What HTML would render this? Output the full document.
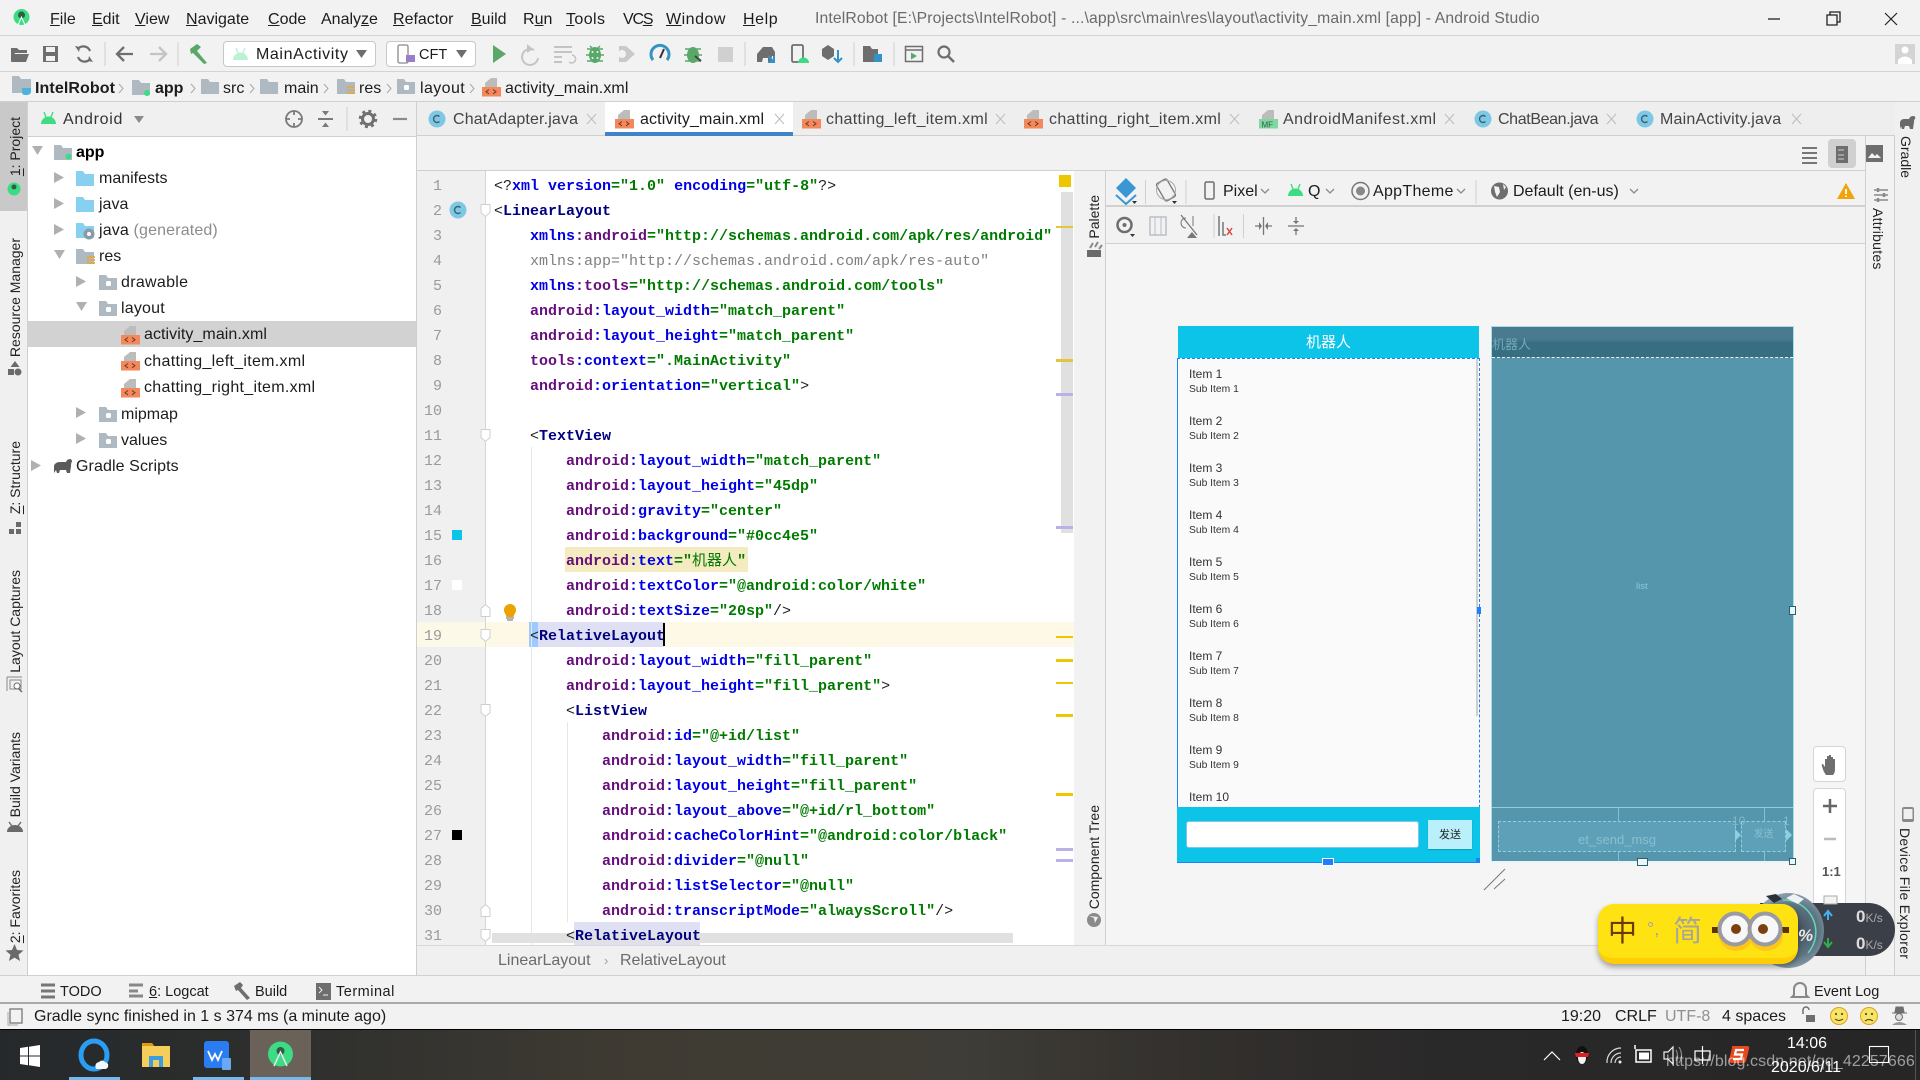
<!DOCTYPE html>
<html lang="en"><head><meta charset="utf-8"><title>IntelRobot - Android Studio</title>
<style>
html,body{margin:0;padding:0;width:1920px;height:1080px;overflow:hidden;background:#f2f2f2}
body{position:relative;font-family:"Liberation Sans","Noto Sans CJK SC",sans-serif;color:#1c1c1c}
.b{position:absolute}
.t{position:absolute;white-space:pre;font-size:16px;line-height:20px;transform:translateY(1px)}
.vl{position:absolute;white-space:pre;writing-mode:vertical-rl;transform:rotate(180deg);font-size:14px;line-height:20px;color:#222}
.vr{position:absolute;white-space:pre;writing-mode:vertical-rl;font-size:14px;line-height:20px;color:#222}
.l{position:absolute;left:494px;white-space:pre;font:bold 15px/25px "Liberation Mono","Noto Sans CJK SC",monospace;color:#222;height:25px;transform:translateY(1px)}
.l i{font-style:normal;color:#660e7a}.l u{text-decoration:none;color:#0000e6}.l s{text-decoration:none;color:#007a00}.l b{color:#000080}.l em{font-style:normal;font-weight:normal;color:#222}
.ln{position:absolute;left:416px;width:26px;text-align:right;font:15px/25px "Liberation Mono",monospace;color:#9a9a9a;transform:translateY(1px)}
.it{position:absolute;left:1189px;font-size:12px;line-height:14px;color:#333;transform:translateY(1px)}
.su{position:absolute;left:1189px;font-size:10.3px;line-height:14px;color:#333;transform:translateY(1px)}
svg{position:absolute;left:0;top:0}
</style></head><body>
<!-- chrome backgrounds -->
<div class="b" style="left:0;top:35px;width:1920px;height:1px;background:#d4d4d4"></div>
<div class="b" style="left:0;top:71px;width:1920px;height:1px;background:#d4d4d4"></div>
<div class="b" style="left:0;top:101px;width:1920px;height:1px;background:#d0d0d0"></div>
<div class="b" style="left:416px;top:102px;width:1479px;height:33px;background:#eeeeee"></div>
<div class="b" style="left:416px;top:135px;width:1479px;height:1px;background:#cfcfcf"></div>
<div class="b" style="left:605px;top:102px;width:188px;height:30px;background:#fff"></div>
<div class="b" style="left:605px;top:132px;width:188px;height:4px;background:#4083c9"></div>
<!-- left stripe -->
<div class="b" style="left:0;top:102px;width:27px;height:873px;background:#f0f0f0;border-right:1px solid #cfcfcf"></div>
<div class="b" style="left:0;top:102px;width:27px;height:109px;background:#c9c9c9"></div>
<!-- project panel -->
<div class="b" style="left:28px;top:102px;width:388px;height:34px;background:#f0f0f0;border-bottom:1px solid #cfcfcf"></div>
<div class="b" style="left:28px;top:137px;width:388px;height:838px;background:#fff"></div>
<div class="b" style="left:27px;top:321px;width:389px;height:26px;background:#d2d2d2"></div>
<div class="b" style="left:416px;top:102px;width:1px;height:873px;background:#cfcfcf"></div>
<!-- editor -->
<div class="b" style="left:417px;top:136px;width:1478px;height:35px;background:#f2f2f2;border-bottom:1px solid #d0d0d0;box-sizing:border-box"></div>
<div class="b" style="left:417px;top:171px;width:68px;height:774px;background:#f0f0f0;border-right:1px solid #d5d5d5"></div>
<div class="b" style="left:486px;top:171px;width:588px;height:774px;background:#fff"></div>
<div class="b" style="left:417px;top:622px;width:68px;height:25px;background:#fdf9e8"></div>
<div class="b" style="left:486px;top:622px;width:588px;height:25px;background:#fef9e6"></div>
<div class="b" style="left:565px;top:547px;width:183px;height:25px;background:#f5ebc0"></div>
<div class="b" style="left:529px;top:622px;width:9px;height:25px;background:#9ecbff"></div>
<div class="b" style="left:538px;top:622px;width:126px;height:25px;background:#e0e0f5"></div>
<div class="b" style="left:574px;top:922px;width:126px;height:23px;background:#e0e0f5"></div>
<div class="b" style="left:531px;top:447px;width:1px;height:498px;background:#e6e6e6"></div>
<div class="b" style="left:567px;top:722px;width:1px;height:200px;background:#e6e6e6"></div>
<div class="b" style="left:1061px;top:192px;width:12px;height:341px;background:#e0e0e0"></div>
<div class="b" style="left:492px;top:933px;width:521px;height:10px;background:#e1e1e1"></div>
<div class="b" style="left:1059px;top:175px;width:12px;height:12px;background:#edc700"></div>
<div class="b" style="left:1056px;top:226px;width:17px;height:2px;background:#e3c53a"></div>
<div class="b" style="left:1056px;top:359px;width:17px;height:3px;background:#e3c53a"></div>
<div class="b" style="left:1056px;top:393px;width:17px;height:3px;background:#b8b2e8"></div>
<div class="b" style="left:1056px;top:526px;width:17px;height:3px;background:#b8b2e8"></div>
<div class="b" style="left:1056px;top:636px;width:17px;height:2px;background:#edc700"></div>
<div class="b" style="left:1056px;top:659px;width:17px;height:3px;background:#edc700"></div>
<div class="b" style="left:1056px;top:682px;width:17px;height:2px;background:#edc700"></div>
<div class="b" style="left:1056px;top:714px;width:17px;height:3px;background:#edc700"></div>
<div class="b" style="left:1056px;top:793px;width:17px;height:3px;background:#edc700"></div>
<div class="b" style="left:1056px;top:848px;width:17px;height:3px;background:#b8b2e8"></div>
<div class="b" style="left:1056px;top:859px;width:17px;height:3px;background:#b8b2e8"></div>
<div class="b" style="left:452px;top:530px;width:10px;height:10px;background:#0cc4e5"></div>
<div class="b" style="left:452px;top:580px;width:10px;height:10px;background:#fff"></div>
<div class="b" style="left:452px;top:830px;width:10px;height:10px;background:#000"></div>
<div class="b" style="left:663px;top:623px;width:2px;height:23px;background:#000"></div>
<!-- line numbers -->
<div class="ln" style="top:173px">1</div><div class="ln" style="top:198px">2</div><div class="ln" style="top:223px">3</div><div class="ln" style="top:248px">4</div><div class="ln" style="top:273px">5</div><div class="ln" style="top:298px">6</div><div class="ln" style="top:323px">7</div><div class="ln" style="top:348px">8</div><div class="ln" style="top:373px">9</div><div class="ln" style="top:398px">10</div><div class="ln" style="top:423px">11</div><div class="ln" style="top:448px">12</div><div class="ln" style="top:473px">13</div><div class="ln" style="top:498px">14</div><div class="ln" style="top:523px">15</div><div class="ln" style="top:548px">16</div><div class="ln" style="top:573px">17</div><div class="ln" style="top:598px">18</div><div class="ln" style="top:623px">19</div><div class="ln" style="top:648px">20</div><div class="ln" style="top:673px">21</div><div class="ln" style="top:698px">22</div><div class="ln" style="top:723px">23</div><div class="ln" style="top:748px">24</div><div class="ln" style="top:773px">25</div><div class="ln" style="top:798px">26</div><div class="ln" style="top:823px">27</div><div class="ln" style="top:848px">28</div><div class="ln" style="top:873px">29</div><div class="ln" style="top:898px">30</div><div class="ln" style="top:923px">31</div>
<!-- code -->
<div class="l" style="top:173px"><em>&lt;?</em><u>xml version</u><s>="1.0"</s> <u>encoding</u><s>="utf-8"</s><em>?&gt;</em></div>
<div class="l" style="top:198px"><em>&lt;</em><b>LinearLayout</b></div>
<div class="l" style="top:223px;left:530px"><u>xmlns</u><i>:android</i><s>="http://schemas.android.com/apk/res/android"</s></div>
<div class="l" style="top:248px;left:530px;font-weight:normal;color:#808080">xmlns:app="http://schemas.android.com/apk/res-auto"</div>
<div class="l" style="top:273px;left:530px"><u>xmlns</u><i>:tools</i><s>="http://schemas.android.com/tools"</s></div>
<div class="l" style="top:298px;left:530px"><i>android</i><u>:layout_width</u><s>="match_parent"</s></div>
<div class="l" style="top:323px;left:530px"><i>android</i><u>:layout_height</u><s>="match_parent"</s></div>
<div class="l" style="top:348px;left:530px"><i>tools</i><u>:context</u><s>=".MainActivity"</s></div>
<div class="l" style="top:373px;left:530px"><i>android</i><u>:orientation</u><s>="vertical"</s><em>&gt;</em></div>
<div class="l" style="top:423px;left:530px"><em>&lt;</em><b>TextView</b></div>
<div class="l" style="top:448px;left:566px"><i>android</i><u>:layout_width</u><s>="match_parent"</s></div>
<div class="l" style="top:473px;left:566px"><i>android</i><u>:layout_height</u><s>="45dp"</s></div>
<div class="l" style="top:498px;left:566px"><i>android</i><u>:gravity</u><s>="center"</s></div>
<div class="l" style="top:523px;left:566px"><i>android</i><u>:background</u><s>="#0cc4e5"</s></div>
<div class="l" style="top:548px;left:566px"><i>android</i><u>:text</u><s>="<span style="font-weight:normal">机器人</span>"</s></div>
<div class="l" style="top:573px;left:566px"><i>android</i><u>:textColor</u><s>="@android:color/white"</s></div>
<div class="l" style="top:598px;left:566px"><i>android</i><u>:textSize</u><s>="20sp"</s><em>/&gt;</em></div>
<div class="l" style="top:623px;left:530px"><em>&lt;</em><b>RelativeLayout</b></div>
<div class="l" style="top:648px;left:566px"><i>android</i><u>:layout_width</u><s>="fill_parent"</s></div>
<div class="l" style="top:673px;left:566px"><i>android</i><u>:layout_height</u><s>="fill_parent"</s><em>&gt;</em></div>
<div class="l" style="top:698px;left:566px"><em>&lt;</em><b>ListView</b></div>
<div class="l" style="top:723px;left:602px"><i>android</i><u>:id</u><s>="@+id/list"</s></div>
<div class="l" style="top:748px;left:602px"><i>android</i><u>:layout_width</u><s>="fill_parent"</s></div>
<div class="l" style="top:773px;left:602px"><i>android</i><u>:layout_height</u><s>="fill_parent"</s></div>
<div class="l" style="top:798px;left:602px"><i>android</i><u>:layout_above</u><s>="@+id/rl_bottom"</s></div>
<div class="l" style="top:823px;left:602px"><i>android</i><u>:cacheColorHint</u><s>="@android:color/black"</s></div>
<div class="l" style="top:848px;left:602px"><i>android</i><u>:divider</u><s>="@null"</s></div>
<div class="l" style="top:873px;left:602px"><i>android</i><u>:listSelector</u><s>="@null"</s></div>
<div class="l" style="top:898px;left:602px"><i>android</i><u>:transcriptMode</u><s>="alwaysScroll"</s><em>/&gt;</em></div>
<div class="l" style="top:923px;left:566px"><em>&lt;</em><b>RelativeLayout</b></div>
<!-- breadcrumb & bottom bars -->
<div class="b" style="left:417px;top:945px;width:1478px;height:30px;background:#f0f0f0;border-top:1px solid #d8d8d8;box-sizing:border-box"></div>
<div class="t" style="left:498px;top:950px;color:#6b6b6b">LinearLayout</div>
<div class="t" style="left:604px;top:950px;color:#a0a0a0;font-size:13px">›</div>
<div class="t" style="left:620px;top:950px;color:#6b6b6b">RelativeLayout</div>
<div class="b" style="left:0;top:975px;width:1920px;height:1px;background:#d0d0d0"></div>
<div class="b" style="left:0;top:1002px;width:1920px;height:2px;background:#a9a9a9"></div>
<div class="b" style="left:0;top:1004px;width:1920px;height:25px;background:#f2f2f2"></div>
<!-- design panel -->
<div class="b" style="left:1074px;top:171px;width:31px;height:774px;background:#f2f2f2"></div>
<div class="b" style="left:1105px;top:171px;width:1px;height:774px;background:#d0d0d0"></div>
<div class="b" style="left:1106px;top:171px;width:759px;height:36px;background:#f2f2f2;border-bottom:2px solid #d0d0d0;box-sizing:border-box"></div>
<div class="b" style="left:1106px;top:207px;width:759px;height:37px;background:#f2f2f2;border-bottom:1px solid #d0d0d0;box-sizing:border-box"></div>
<div class="b" style="left:1106px;top:244px;width:759px;height:701px;background:#f5f5f5"></div>
<div class="b" style="left:1865px;top:136px;width:30px;height:839px;background:#f2f2f2;border-left:1px solid #d0d0d0;border-right:1px solid #d0d0d0;box-sizing:border-box"></div>
<div class="b" style="left:1895px;top:102px;width:25px;height:873px;background:#f0f0f0"></div>
<div class="b" style="left:1828px;top:139px;width:28px;height:29px;background:#d0d0d0;border-radius:4px"></div>
<!-- phone left -->
<div class="b" style="left:1178px;top:326px;width:301px;height:32px;background:#0cc4e8;color:#fff;font-size:15px;line-height:34px;text-align:center">机器人</div>
<div class="b" style="left:1177px;top:358px;width:303px;height:505px;background:#fafafa;box-sizing:border-box;border:1px dashed #1e80ff;border-left:1px solid #1e80ff"></div>
<div class="b" style="left:1476px;top:359px;width:2px;height:357px;background:#cfcfcf"></div>
<div class="it" style="top:366px">Item 1</div><div class="su" style="top:382px">Sub Item 1</div>
<div class="it" style="top:413px">Item 2</div><div class="su" style="top:429px">Sub Item 2</div>
<div class="it" style="top:460px">Item 3</div><div class="su" style="top:476px">Sub Item 3</div>
<div class="it" style="top:507px">Item 4</div><div class="su" style="top:523px">Sub Item 4</div>
<div class="it" style="top:554px">Item 5</div><div class="su" style="top:570px">Sub Item 5</div>
<div class="it" style="top:601px">Item 6</div><div class="su" style="top:617px">Sub Item 6</div>
<div class="it" style="top:648px">Item 7</div><div class="su" style="top:664px">Sub Item 7</div>
<div class="it" style="top:695px">Item 8</div><div class="su" style="top:711px">Sub Item 8</div>
<div class="it" style="top:742px">Item 9</div><div class="su" style="top:758px">Sub Item 9</div>
<div class="it" style="top:789px">Item 10</div>
<div class="b" style="left:1177px;top:807px;width:303px;height:56px;background:#0cc4e8;border-bottom:1px solid #1e80ff;box-sizing:border-box"></div>
<div class="b" style="left:1186px;top:821px;width:233px;height:27px;background:#fff;border-radius:3px;border:1px solid #7cc8ea;box-sizing:border-box"></div>
<div class="b" style="left:1428px;top:820px;width:44px;height:29px;background:#b9f0fb;font-size:11px;line-height:30px;text-align:center;color:#222;box-shadow:0 1px 1px #0a9dba">发送</div>
<div class="b" style="left:1322px;top:858px;width:10px;height:6px;background:#1e80ff;border:1px solid #fff"></div>
<div class="b" style="left:1476px;top:858px;width:4px;height:5px;background:#1e80ff"></div>
<div class="b" style="left:1477px;top:607px;width:4px;height:7px;background:#1e80ff"></div>
<!-- blueprint -->
<div class="b" style="left:1491px;top:326px;width:303px;height:537px;background:#5596ac;box-sizing:border-box;border:1px solid #a7dcea"></div>
<div class="b" style="left:1492px;top:327px;width:301px;height:30px;background:linear-gradient(#4a7a8e 0,#4a7a8e 12px,#376e82 16px);border-bottom:1px dashed #e8f4f8"></div>
<div class="t" style="left:1492px;top:334px;font-size:13px;color:#74a9b8">机器人</div>
<div class="t" style="left:1636px;top:576px;font-size:9.5px;color:#8cc9dc">list</div>
<div class="b" style="left:1492px;top:807px;width:301px;height:1px;background:#8ed0e2"></div>
<div class="b" style="left:1618px;top:808px;width:1px;height:54px;background:#7fc2d6"></div>
<div class="b" style="left:1764px;top:808px;width:1px;height:54px;background:#7fc2d6"></div>
<div class="b" style="left:1498px;top:821px;width:238px;height:31px;background:#5fa0b9;box-sizing:border-box;border:1px dashed #8ed0e2;text-align:center;color:#86c0d0;font-size:13px;line-height:35px">et_send_msg</div>
<div class="b" style="left:1741px;top:821px;width:45px;height:31px;background:#5fa0b9;box-sizing:border-box;border:1px dashed #8ed0e2;text-align:center;color:#86c0d0;font-size:10px;line-height:26px">发送</div>
<div class="t" style="left:1732px;top:810px;font-size:12px;color:#7fb9ca">10</div>
<div class="t" style="left:1783px;top:810px;font-size:12px;color:#7fb9ca">1</div>
<div class="b" style="left:1491px;top:861px;width:303px;height:2px;background:#e8f4f8"></div>
<div class="b" style="left:1637px;top:858px;width:9px;height:6px;background:#e8f8fb;border:1px solid #2e5f70"></div>
<div class="b" style="left:1789px;top:858px;width:5px;height:5px;background:#e8f8fb;border:1px solid #2e5f70"></div>
<div class="b" style="left:1789px;top:606px;width:5px;height:7px;background:#e8f8fb;border:1px solid #2e5f70"></div>
<!-- floating zoom controls -->
<div class="b" style="left:1813px;top:746px;width:33px;height:36px;background:#fff;border:1px solid #d6d6d6;border-radius:4px;box-sizing:border-box"></div>
<div class="b" style="left:1813px;top:788px;width:33px;height:134px;background:#fff;border:1px solid #d6d6d6;border-radius:4px;box-sizing:border-box"></div>
<div class="t" style="left:1822px;top:861px;font-size:13px;font-weight:bold;color:#555">1:1</div>
<!-- menu & title -->
<div class="t" style="left:50px;top:9px"><span style="text-decoration:underline">F</span>ile</div>
<div class="t" style="left:92px;top:9px"><span style="text-decoration:underline">E</span>dit</div>
<div class="t" style="left:135px;top:9px"><span style="text-decoration:underline">V</span>iew</div>
<div class="t" style="left:186px;top:9px"><span style="text-decoration:underline">N</span>avigate</div>
<div class="t" style="left:268px;top:9px"><span style="text-decoration:underline">C</span>ode</div>
<div class="t" style="left:321px;top:9px">Analy<span style="text-decoration:underline">z</span>e</div>
<div class="t" style="left:393px;top:9px"><span style="text-decoration:underline">R</span>efactor</div>
<div class="t" style="left:471px;top:9px"><span style="text-decoration:underline">B</span>uild</div>
<div class="t" style="left:523px;top:9px">R<span style="text-decoration:underline">u</span>n</div>
<div class="t" style="left:566px;top:9px;letter-spacing:.4px"><span style="text-decoration:underline">T</span>ools</div>
<div class="t" style="left:623px;top:9px;letter-spacing:-1.2px">VC<span style="text-decoration:underline">S</span></div>
<div class="t" style="left:666px;top:9px;letter-spacing:.5px"><span style="text-decoration:underline">W</span>indow</div>
<div class="t" style="left:743px;top:9px;letter-spacing:.6px"><span style="text-decoration:underline">H</span>elp</div>
<div class="t" style="left:815px;top:8px;color:#6a6a6a;font-size:15.7px;letter-spacing:.15px">IntelRobot [E:\Projects\IntelRobot] - ...\app\src\main\res\layout\activity_main.xml [app] - Android Studio</div>
<!-- toolbar combos -->
<div class="b" style="left:223px;top:41px;width:153px;height:26px;background:#fff;border:1px solid #c8c8c8;border-radius:4px;box-sizing:border-box"></div>
<div class="t" style="left:256px;top:44px;letter-spacing:.6px">MainActivity</div>
<div class="b" style="left:386px;top:41px;width:90px;height:26px;background:#fff;border:1px solid #c8c8c8;border-radius:4px;box-sizing:border-box"></div>
<div class="t" style="left:419px;top:44px;font-size:14.5px">CFT</div>
<!-- nav bar -->
<div class="t" style="left:35px;top:78px;font-weight:bold;letter-spacing:.1px">IntelRobot</div>
<div class="t" style="left:155px;top:78px;font-weight:bold">app</div>
<div class="t" style="left:223px;top:78px">src</div>
<div class="t" style="left:284px;top:78px">main</div>
<div class="t" style="left:359px;top:78px">res</div>
<div class="t" style="left:420px;top:78px;letter-spacing:.4px">layout</div>
<div class="t" style="left:505px;top:78px;letter-spacing:.1px">activity_main.xml</div>
<!-- tabs -->
<div class="t" style="left:453px;top:109px;color:#444;letter-spacing:.15px">ChatAdapter.java</div>
<div class="t" style="left:640px;top:109px;letter-spacing:.14px">activity_main.xml</div>
<div class="t" style="left:826px;top:109px;color:#444;letter-spacing:.33px">chatting_left_item.xml</div>
<div class="t" style="left:1049px;top:109px;color:#444;letter-spacing:.33px">chatting_right_item.xml</div>
<div class="t" style="left:1283px;top:109px;color:#444;letter-spacing:.45px">AndroidManifest.xml</div>
<div class="t" style="left:1498px;top:109px;color:#444;letter-spacing:-.37px">ChatBean.java</div>
<div class="t" style="left:1660px;top:109px;color:#444;letter-spacing:.2px">MainActivity.java</div>
<!-- project tree -->
<div class="t" style="left:63px;top:109px;color:#333;letter-spacing:.7px">Android</div>
<div class="t" style="left:76px;top:142px;font-weight:bold;color:#000">app</div>
<div class="t" style="left:99px;top:168px">manifests</div>
<div class="t" style="left:99px;top:194px">java</div>
<div class="t" style="left:99px;top:220px;letter-spacing:.15px">java <span style="color:#8c8c8c">(generated)</span></div>
<div class="t" style="left:99px;top:246px">res</div>
<div class="t" style="left:121px;top:272px;letter-spacing:.3px">drawable</div>
<div class="t" style="left:121px;top:298px;letter-spacing:.2px">layout</div>
<div class="t" style="left:144px;top:324px;letter-spacing:.07px">activity_main.xml</div>
<div class="t" style="left:144px;top:351px;letter-spacing:.3px">chatting_left_item.xml</div>
<div class="t" style="left:144px;top:377px;letter-spacing:.3px">chatting_right_item.xml</div>
<div class="t" style="left:121px;top:404px">mipmap</div>
<div class="t" style="left:121px;top:430px">values</div>
<div class="t" style="left:76px;top:456px;letter-spacing:.1px">Gradle Scripts</div>
<!-- side labels -->
<div class="vl" style="left:5px;top:117px"><span style="text-decoration:underline">1</span>: Project</div>
<div class="vl" style="left:5px;top:238px">Resource Manager</div>
<div class="vl" style="left:5px;top:441px"><span style="text-decoration:underline">Z</span>: Structure</div>
<div class="vl" style="left:5px;top:570px">Layout Captures</div>
<div class="vl" style="left:5px;top:732px">Build Variants</div>
<div class="vl" style="left:5px;top:870px"><span style="text-decoration:underline">2</span>: Favorites</div>
<div class="vr" style="left:1896px;top:136px">Gradle</div>
<div class="vr" style="left:1868px;top:208px;letter-spacing:.25px">Attributes</div>
<div class="vr" style="left:1895px;top:828px;letter-spacing:.3px">Device File Explorer</div>
<div class="vl" style="left:1084px;top:195px">Palette</div>
<div class="vl" style="left:1084px;top:805px">Component Tree</div>
<!-- design toolbar text -->
<div class="t" style="left:1223px;top:181px">Pixel</div>
<div class="t" style="left:1308px;top:181px">Q</div>
<div class="t" style="left:1373px;top:181px;letter-spacing:.3px">AppTheme</div>
<div class="t" style="left:1513px;top:181px">Default (en-us)</div>
<!-- bottom text -->
<div class="t" style="left:60px;top:981px;font-size:14.5px">TODO</div>
<div class="t" style="left:149px;top:981px;font-size:14.5px"><span style="text-decoration:underline">6</span>: Logcat</div>
<div class="t" style="left:255px;top:981px;font-size:14.5px">Build</div>
<div class="t" style="left:336px;top:981px;font-size:14.5px;letter-spacing:.5px">Terminal</div>
<div class="t" style="left:1814px;top:981px;font-size:14.5px">Event Log</div>
<div class="t" style="left:34px;top:1006px">Gradle sync finished in 1 s 374 ms (a minute ago)</div>
<div class="t" style="left:1561px;top:1006px">19:20</div>
<div class="t" style="left:1615px;top:1006px">CRLF</div>
<div class="t" style="left:1665px;top:1006px;color:#909090">UTF-8</div>
<div class="t" style="left:1722px;top:1006px">4 spaces</div>
<!-- taskbar -->
<div class="b" style="left:0;top:1029px;width:1920px;height:51px;background:linear-gradient(90deg,#25292b 0,#2e2f2d 15%,#3f3b33 33%,#3f3d37 50%,#33302d 62%,#2a2929 75%,#262626 100%);border-top:1px solid #000;box-sizing:border-box"></div>
<div class="b" style="left:250px;top:1030px;width:61px;height:50px;background:#6a6158"></div>
<div class="b" style="left:69px;top:1077px;width:51px;height:3px;background:#76b9ed"></div>
<div class="b" style="left:193px;top:1077px;width:51px;height:3px;background:#76b9ed"></div>
<div class="b" style="left:250px;top:1077px;width:61px;height:3px;background:#76b9ed"></div>
<div class="b" style="left:1915px;top:1030px;width:1px;height:50px;background:#555"></div>
<div class="t" style="left:1782px;top:1033px;color:#fff;width:50px;text-align:center">14:06</div>
<div class="t" style="left:1768px;top:1057px;color:#fff;width:76px;text-align:center">2020/6/11</div>
<!-- IME widget -->
<div class="b" style="left:1760px;top:903px;width:135px;height:53px;background:#3b3f47;border-radius:0 27px 27px 0"></div>
<div class="b" style="left:1752px;top:893px;width:72px;height:75px;border-radius:50%;background:radial-gradient(circle at 58% 50%,#3f4a55 0,#5d7483 45%,#9db2be 78%,#e6ecef 100%)"></div>
<div class="b" style="left:1598px;top:904px;width:200px;height:60px;background:#ffe212;border-radius:16px;border-bottom:6px solid #ffcd05;box-sizing:border-box;box-shadow:0 3px 6px rgba(0,0,0,.35)"></div>
<div class="t" style="left:1608px;top:911px;font-size:29px;line-height:40px;color:#6a3a00">中</div>
<div class="t" style="left:1647px;top:913px;font-size:18px;line-height:30px;color:#a8a59a">°,</div>
<div class="t" style="left:1673px;top:911px;font-size:29px;line-height:40px;color:#a8a59a">简</div>
<div class="t" style="left:1798px;top:920px;font-size:17px;line-height:30px;font-style:italic;font-weight:bold;color:#e8e8e8">%</div>
<div class="t" style="left:1856px;top:906px;font-size:17px;font-weight:bold;color:#ddd">0<span style="font-size:12px;font-weight:normal;color:#aaa">K/s</span></div>
<div class="t" style="left:1856px;top:933px;font-size:17px;font-weight:bold;color:#ddd">0<span style="font-size:12px;font-weight:normal;color:#aaa">K/s</span></div>
<!-- icons -->
<svg width="1920" height="1080" viewBox="0 0 1920 1080">
<defs>
<g id="xf"><path d="M9 0h6v9H3V5z" fill="#bcbcbc"/><rect y="9" width="19" height="9.500" fill="#f2885b"/><path d="M7 11.500l-3 2.200 3 2.200M11 11.500l3 2.200-3 2.200" fill="none" stroke="#6b3a20" stroke-width="1"/></g>
<path id="fo" d="M0 0h7l2 3h9v12H0z"/>
<g id="fd"><path d="M0 0h7l2 3h9v12H0z" fill="#afb9c2"/><rect x="7" y="6" width="5" height="5" rx="1.500" fill="#fff"/></g>
<g id="ad"><path d="M0 13a7.500 7.500 0 0 1 15 0z" fill="#3ddc84"/><path d="M3 1l2 5M12 1l-2 5" stroke="#3ddc84" stroke-width="1.400"/></g>
<g id="cc"><circle cx="9" cy="9" r="8.500" fill="#7dc8e4"/><path d="M11.500 6.500a3.500 3.500 0 1 0 0 5" fill="none" stroke="#40606e" stroke-width="1.400"/></g>
<path id="tr" d="M0 0l10 5.500L0 11z" fill="#b0b0b0"/>
<path id="td" d="M0 0h11L5.500 9z" fill="#b0b0b0"/>
<path id="sc" d="M0 0l4 4.500L0 9" fill="none" stroke="#a8a8a8" stroke-width="1"/>
<path id="xx" d="M0 0l9 10M9 0L0 10" stroke="#bdbdbd" stroke-width="1" fill="none"/>
<path id="dw" d="M0 0l4 4 4-4" fill="none" stroke="#8a8a8a" stroke-width="1.300"/>
<path id="fold" d="M0 .5h9v8l-4.500 4-4.500-4z" fill="#fff" stroke="#cfcfcf"/>
<path id="foldu" d="M0 12.500h9v-8L4.500.5 0 4.500z" fill="#fff" stroke="#cfcfcf"/>
<path id="sep" d="M0 0v24" stroke="#d0d0d0"/>
</defs>
<!-- logo -->
<circle cx="21.500" cy="17" r="8" fill="#3ddc84"/><circle cx="21.500" cy="15" r="3.500" fill="#2f5d46"/><path d="M18 25l3.500-8 3.500 8" stroke="#fff" fill="none"/>
<!-- window controls -->
<path d="M1768 19h12" stroke="#222" stroke-width="1.300"/><path d="M1827 15h10v10h-10zM1830 15v-3h10v10h-3" fill="none" stroke="#222" stroke-width="1.300"/><path d="M1885 13l12 12M1897 13l-12 12" stroke="#222" stroke-width="1.200"/>
<!-- toolbar -->
<path d="M11 48h6l2 2h8v3H15l-3 8h-1zM14 54h15l-3 8H11z" fill="#6e6e6e"/>
<path d="M43 46h15v16H43z" fill="#6e6e6e"/><path d="M46 47h9v5h-9zM46 56h9v5h-9z" fill="#f2f2f2"/>
<path d="M90 51a7 7 0 0 0-12-2M78 57a7 7 0 0 0 12 2" fill="none" stroke="#6e6e6e" stroke-width="2.200"/><path d="M75 46l5 1-1 5zM93 62l-5-1 1-5z" fill="#6e6e6e"/>
<use href="#sep" x="105" y="42"/><use href="#sep" x="178" y="42"/>
<path d="M133 54h-15M124 47l-7 7 7 7" fill="none" stroke="#6e6e6e" stroke-width="2.300"/><path d="M150 54h15M159 47l7 7-7 7" fill="none" stroke="#c4c4c4" stroke-width="2.300"/>
<path d="M190 49l7-5 4 3-4 4 10 12-3 1-11-11-2 1z" fill="#59a869"/>
<use href="#ad" x="233" y="47" opacity=".35"/>
<path d="M356 50h11l-5.500 8z" fill="#6e6e6e"/>
<rect x="398" y="45" width="10" height="18" rx="1.500" fill="none" stroke="#8a8a8a" stroke-width="1.300"/><rect x="406" y="55" width="9" height="7" fill="#9a7ec8"/>
<path d="M456 50h11l-5.500 8z" fill="#6e6e6e"/>
<path d="M493 45l13 9-13 9z" fill="#59a869"/>
<path d="M534 50a8 8 0 1 0 4 8" fill="none" stroke="#c4c4c4" stroke-width="2"/><path d="M527 44l6 5-6 4z" fill="#c4c4c4"/>
<path d="M554 47h18M554 52h18M554 57h8M554 62h8" stroke="#c4c4c4" stroke-width="2"/><path d="M572 55a4 4 0 1 1-3 7" fill="none" stroke="#c4c4c4" stroke-width="1.500"/>
<ellipse cx="595" cy="55" rx="6" ry="8" fill="#59a869"/><path d="M587 49l16 0M586 55h18M587 61h16M590 46l3 3M600 46l-3 3" stroke="#59a869" stroke-width="1.500"/><circle cx="592.500" cy="52" r="1" fill="#f2f2f2"/><circle cx="597.500" cy="52" r="1" fill="#f2f2f2"/><circle cx="592.500" cy="58" r="1" fill="#f2f2f2"/><circle cx="597.500" cy="58" r="1" fill="#f2f2f2"/>
<path d="M619 46h7l9 8-9 8h-7z" fill="#c9c9c9"/><circle cx="622" cy="54" r="4" fill="#f2f2f2"/>
<path d="M653 60a9 9 0 1 1 14 0" fill="none" stroke="#3592c4" stroke-width="3"/><path d="M660 58l4-9" stroke="#333" stroke-width="2"/>
<ellipse cx="693" cy="55" rx="6" ry="8" fill="#59a869"/><path d="M685 49h16M684 55h18M685 61h16" stroke="#59a869" stroke-width="1.500"/><path d="M695 56l6 5" stroke="#444" stroke-width="2"/>
<rect x="718" y="47" width="15" height="15" fill="#d0d0d0"/>
<use href="#sep" x="745" y="42"/>
<path d="M757 62v-8l6-7h9l3 5v4h-3l-1 6h-3v-4h-5l-1 4z" fill="#6e6e6e"/><path d="M768 56l6 6M774 56v6h-6" fill="none" stroke="#3592c4" stroke-width="2"/>
<rect x="792" y="45" width="11" height="17" rx="1.500" fill="none" stroke="#6e6e6e" stroke-width="1.800"/><path d="M798 63a5.500 5.500 0 0 1 11 0z" fill="#3ddc84"/>
<path d="M822 49l6-4 6 4v7l-6 4-6-4z" fill="#6e6e6e"/><path d="M838 50v11M834 58l4 4 4-4" fill="none" stroke="#3592c4" stroke-width="2"/>
<use href="#sep" x="854" y="42"/>
<path d="M863 46h7l2 3h6v13h-15z" fill="#6e6e6e"/><rect x="874" y="54" width="8" height="8" fill="#3592c4"/>
<use href="#sep" x="894" y="42"/>
<rect x="905.500" y="46.500" width="17" height="15" fill="none" stroke="#6e6e6e" stroke-width="1.500"/><path d="M905 50h18" stroke="#6e6e6e" stroke-width="1.500"/><path d="M911 52.500l6 3.500-6 3.500z" fill="#59a869"/>
<circle cx="944" cy="52" r="5.500" fill="none" stroke="#6e6e6e" stroke-width="2.200"/><path d="M948 56l6 6" stroke="#6e6e6e" stroke-width="2.500"/>
<rect x="1895" y="44" width="20" height="20" fill="#d4d4d4"/><circle cx="1905" cy="50" r="3.500" fill="#fff"/><path d="M1898 64v-4q7-7 14 0v4z" fill="#fff"/>
<!-- nav icons -->
<path d="M12 76h7l2 3h10v14H12z" fill="#afb9c2"/><path d="M22 88h9v4q-1 3-4 3h-2q-3 0-3-3z" fill="#4fb3d9"/>
<use href="#fo" x="132" y="80" fill="#afb9c2"/><circle cx="147" cy="93" r="3" fill="#3ddc84"/>
<use href="#sc" x="119" y="84"/><use href="#sc" x="191" y="84"/><use href="#sc" x="250" y="84"/><use href="#sc" x="324" y="84"/><use href="#sc" x="387" y="84"/><use href="#sc" x="470" y="84"/>
<use href="#fo" x="201" y="79" fill="#afb9c2"/><use href="#fo" x="260" y="79" fill="#afb9c2"/><use href="#fo" x="337" y="79" fill="#afb9c2"/><path d="M347 87h8M347 90h8M347 93h8" stroke="#e0a84a" stroke-width="1.500"/>
<use href="#fd" x="397" y="79"/><use href="#xf" x="482" y="78"/>
<!-- tabs -->
<use href="#cc" x="428" y="110"/><use href="#xx" x="587" y="114"/>
<use href="#xf" x="615" y="110"/><use href="#xx" x="775" y="114"/>
<use href="#xf" x="802" y="110"/><use href="#xx" x="996" y="114"/>
<use href="#xf" x="1024" y="110"/><use href="#xx" x="1230" y="114"/>
<path d="M1268 110h6v9h-12v-4z" fill="#bcbcbc"/><rect x="1259" y="119" width="19" height="9.500" fill="#80d8a0"/><text x="1261.500" y="127.500" font-family="Liberation Sans" font-size="8" fill="#2f5d46">MF</text><use href="#xx" x="1445" y="114"/>
<use href="#cc" x="1474" y="110"/><use href="#xx" x="1607" y="114"/>
<use href="#cc" x="1636" y="110"/><use href="#xx" x="1792" y="114"/>
<!-- project header -->
<use href="#ad" x="41" y="111"/>
<path d="M134 116h10l-5 7z" fill="#8a8a8a"/>
<circle cx="294" cy="119" r="8" fill="none" stroke="#7a7a7a" stroke-width="1.800"/><path d="M294 111v4M294 123v4M286 119h4M298 119h4" stroke="#7a7a7a" stroke-width="1.800"/>
<path d="M318 119h15" stroke="#7a7a7a" stroke-width="2"/><path d="M322 111h7l-3.500 4.500zM322 127h7l-3.500-4.500z" fill="#7a7a7a"/>
<path d="M347 107v24" stroke="#d0d0d0"/>
<circle cx="368" cy="119" r="5.500" fill="none" stroke="#707070" stroke-width="3"/><circle cx="368" cy="119" r="8" fill="none" stroke="#707070" stroke-width="2.500" stroke-dasharray="3 3.300"/>
<path d="M393 119h14" stroke="#8a8a8a" stroke-width="2.200"/>
<!-- tree -->
<use href="#td" x="32" y="146"/><use href="#fo" x="54" y="145" fill="#afb9c2"/><circle cx="68.500" cy="156.500" r="3" fill="#3ddc84"/>
<use href="#tr" x="54" y="172"/><use href="#fo" x="76" y="171" fill="#87d0f0"/>
<use href="#tr" x="54" y="198"/><use href="#fo" x="76" y="197" fill="#87d0f0"/>
<use href="#tr" x="54" y="224"/><use href="#fo" x="76" y="223" fill="#87d0f0"/><circle cx="89" cy="234" r="5.500" fill="#8a9aa6"/><circle cx="89" cy="234" r="2" fill="#fff"/>
<use href="#td" x="54" y="250"/><use href="#fo" x="76" y="249" fill="#afb9c2"/><path d="M87 257h8M87 260h8M87 263h8" stroke="#e0a84a" stroke-width="1.800"/>
<use href="#tr" x="76" y="276"/><use href="#fd" x="99" y="275"/>
<use href="#td" x="76" y="302"/><use href="#fd" x="99" y="301"/>
<use href="#xf" x="121" y="326"/><use href="#xf" x="121" y="352"/><use href="#xf" x="121" y="379"/>
<use href="#tr" x="76" y="407"/><use href="#fd" x="99" y="407"/>
<use href="#tr" x="76" y="433"/><use href="#fd" x="99" y="433"/>
<use href="#tr" x="31" y="460"/>
<path d="M54 473v-7q1-4 6-4h6q1-3 4-3 2 0 2 3-1 0-1 4l-1 7h-3l-1-3h-6l-1 3h-2l-1-3z" fill="#5a5a5a"/>
<!-- stripe icons -->
<circle cx="14" cy="189" r="6.500" fill="#3ddc84"/><circle cx="14" cy="187" r="2.500" fill="#2f5d46"/>
<path d="M15 361l4.500 6h-9zM8 369h6v6H8z" fill="#6a6a6a"/><circle cx="18" cy="372" r="3.500" fill="#6a6a6a"/>
<rect x="9" y="529" width="5" height="5" fill="#6a6a6a"/><rect x="16" y="529" width="5" height="5" fill="#6a6a6a"/><rect x="16" y="522" width="5" height="5" fill="#6a6a6a"/>
<path d="M7 677h15M7 677v14" stroke="#8a8a8a" fill="none"/><rect x="10" y="680" width="11" height="9" fill="none" stroke="#8a8a8a"/><circle cx="17" cy="686" r="3" fill="#fff" stroke="#6a6a6a"/><path d="M19 689l3 3" stroke="#6a6a6a" stroke-width="1.500"/>
<path d="M7 832a8 7 0 0 1 16 0z" fill="#6a6a6a"/><path d="M9 822l3 4M21 822l-3 4" stroke="#6a6a6a" stroke-width="1.400"/>
<path d="M14.500 944l2.500 6 6.500.5-5 4.200 1.600 6.300-5.600-3.400-5.600 3.400 1.600-6.300-5-4.200 6.500-.5z" fill="#6a6a6a"/>
<!-- right icons -->
<path d="M1900 129v-7q1-3 4-3h5q1-3 4-3 3 0 2 3-1 0-1 3l-1 7h-3l-1-3h-4l-1 3h-2l-1-3z" fill="#6a6a6a"/>
<path d="M1802 148h15M1802 153h15M1802 158h15M1802 163h15" stroke="#777" stroke-width="2"/>
<path d="M1836 146h12v17h-12z" fill="#6e6e6e"/><path d="M1838 150h6M1838 155h6M1838 159h6" stroke="#d0d0d0"/>
<rect x="1866" y="145" width="17" height="17" fill="#6e6e6e"/><path d="M1868 158l4-5 3 3 2-2 4 4z" fill="#f2f2f2"/>
<path d="M1874 190h14M1874 195h14M1874 200h14" stroke="#8a8a8a" stroke-width="1.500"/><path d="M1878 188v4M1884 193v4M1878 198v4" stroke="#8a8a8a" stroke-width="2.500"/>
<rect x="1902" y="807" width="12" height="15" rx="2" fill="#8a8a8a"/><rect x="1903.500" y="809" width="9" height="10" fill="#f0f0f0"/>
<!-- palette strip icons -->
<path d="M1087 257v-7h14v7z" fill="#6a6a6a"/><path d="M1090 248l3-5M1095 247l3-5M1099 249l3-4" stroke="#8a8a8a" stroke-width="2"/>
<circle cx="1094" cy="920" r="7" fill="#8a8a8a"/><path d="M1089 916l5 2 1 5 3-6" fill="#f2f2f2"/>
<!-- gutter -->
<use href="#cc" x="449" y="201"/>
<use href="#fold" x="481" y="204"/><use href="#fold" x="481" y="429"/><use href="#foldu" x="481" y="604"/><use href="#fold" x="481" y="629"/><use href="#fold" x="481" y="704"/><use href="#foldu" x="481" y="904"/><use href="#fold" x="481" y="929"/>
<path d="M510 604a6 6 0 0 1 6 6c0 3-2 4-2.500 7h-7c-.5-3-2.500-4-2.500-7a6 6 0 0 1 6-6z" fill="#eda200"/><path d="M506 618h8M507 620h6" stroke="#888" stroke-width="1.200"/>
<!-- design toolbar -->
<path d="M1126 178l10 10-10 10-10-10z" fill="#3b97d3"/><path d="M1116 195l10 9 10-9" fill="none" stroke="#3b97d3" stroke-width="2"/><path d="M1132 201h5l-2.500 3z" fill="#333"/>
<path d="M1145.500 180v24" stroke="#d0d0d0"/>
<rect x="1160" y="180" width="12" height="20" rx="2" transform="rotate(-30 1166 190)" fill="none" stroke="#777" stroke-width="1.300"/><circle cx="1166" cy="190" r="9.500" fill="none" stroke="#aaa"/><path d="M1172 201h5l-2.500 3z" fill="#333"/>
<path d="M1186 180v24" stroke="#d0d0d0"/>
<rect x="1205" y="182" width="9" height="17" rx="1.500" fill="none" stroke="#6e6e6e" stroke-width="1.500"/>
<use href="#dw" x="1261" y="189"/>
<use href="#ad" x="1288" y="183"/>
<use href="#dw" x="1326" y="189"/>
<circle cx="1360.500" cy="191" r="8.500" fill="none" stroke="#777" stroke-width="1.500"/><circle cx="1360.500" cy="191" r="4.500" fill="#888"/>
<use href="#dw" x="1457" y="189"/>
<path d="M1476 180v24" stroke="#d0d0d0"/>
<circle cx="1499.500" cy="191" r="8.500" fill="#6e6e6e"/><path d="M1494 186l5 1 1 5-3 5-2-5zM1503 184l3 3-2 3z" fill="#f2f2f2"/>
<use href="#dw" x="1630" y="189"/>
<path d="M1846 183l9 16h-18z" fill="#f0a30a"/><path d="M1846 189v5M1846 195.500v1.500" stroke="#fff" stroke-width="1.800"/>
<circle cx="1124.500" cy="225" r="7" fill="none" stroke="#6e6e6e" stroke-width="2.500"/><circle cx="1124.500" cy="225" r="2" fill="#6e6e6e"/><path d="M1130 234h5l-2.500 3z" fill="#333"/>
<rect x="1150" y="217" width="16" height="18" fill="none" stroke="#b8c0c8" stroke-width="1.500"/><path d="M1155 217v18M1161 217v18" stroke="#b8c0c8"/>
<path d="M1181 215l16 20" stroke="#777" stroke-width="1.300"/><path d="M1186 218a5 5 0 0 0 0 10M1193 216v10" stroke="#777" fill="none"/><path d="M1187 238l5-6 5 6z" fill="#777"/>
<path d="M1214 214v24M1243.500 214v24" stroke="#d0d0d0"/>
<path d="M1219 216v20M1223 222v13h3" fill="none" stroke="#777" stroke-width="1.500"/><path d="M1227 228l5 7M1232 228l-5 7" stroke="#d44" stroke-width="1.500"/>
<path d="M1263.500 217v18" stroke="#777" stroke-width="1.300"/><path d="M1255 226h5M1267 226h5" stroke="#777" stroke-width="1.300"/><path d="M1259 222v8l3-4zM1268 222v8l-3-4z" fill="#777"/>
<path d="M1288 226h16" stroke="#777" stroke-width="1.300"/><path d="M1296 217v5M1296 230v5" stroke="#777" stroke-width="1.300"/><path d="M1293 221h6l-3 3zM1293 231h6l-3-3z" fill="#777"/>
<!-- blueprint triangles -->
<path d="M1735 829l6 6-6 6z" fill="#8ed0e2"/><path d="M1786 829l6 6-6 6z" fill="#8ed0e2"/>
<path d="M1484 890l21-21M1494 889l11-10" stroke="#777"/>
<!-- floating controls icons -->
<path d="M1826 775q-3-4-4-9-1-2 1-2l2 3v-8h2v-3h2v-1h2v2h2v2h2v10q0 4-2 6z" fill="#6e6e6e"/>
<path d="M1830 799v14M1823 806h14" stroke="#666" stroke-width="2.500"/><path d="M1824 839h12" stroke="#bbb" stroke-width="2.500"/>
<rect x="1824" y="896" width="13" height="8" fill="#f4f4f4" stroke="#aaa"/>
<!-- IME widget svg -->
<path d="M1783 900a32 32 0 0 1 25 53" fill="none" stroke="#63d9b5" stroke-width="1.500"/>
<path d="M1786 898l8-4 10 5-6 5z" fill="#eef2f4"/><path d="M1766 896l10-2 6 5-8 4z" fill="#2a3138"/>
<rect x="1712" y="927" width="77" height="6" fill="#5b3200"/>
<ellipse cx="1736" cy="935" rx="17" ry="16" fill="#ffc61a"/><ellipse cx="1766" cy="935" rx="17" ry="16" fill="#ffc61a"/>
<circle cx="1735" cy="929" r="15.500" fill="#f7f7f7" stroke="#9a9aa0" stroke-width="4"/><circle cx="1765" cy="929" r="15.500" fill="#f7f7f7" stroke="#9a9aa0" stroke-width="4"/>
<circle cx="1736" cy="929" r="5" fill="#7a4010"/><circle cx="1763" cy="929" r="5" fill="#7a4010"/>
<path d="M1828 912v8M1824 916l4-5 4 5" fill="none" stroke="#45b0f0" stroke-width="2"/><path d="M1828 938v8M1824 942l4 5 4-5" fill="none" stroke="#2fae4a" stroke-width="2"/>
<!-- bottom icons -->
<path d="M41 985h14M41 991h14M41 997h14" stroke="#777" stroke-width="3"/>
<path d="M129 985h14M129 991h9M129 996h14" stroke="#888" stroke-width="3"/>
<path d="M234 986l6-4 3 3-2 3 9 10-3 2-9-10-2 1z" fill="#6e6e6e"/>
<rect x="316" y="983" width="15" height="17" fill="#6e6e6e"/><path d="M319 987l3 3-3 3M323 995h5" fill="none" stroke="#f2f2f2"/>
<path d="M1794 995v-6a6 6 0 0 1 12 0v6l2 2h-16z" fill="none" stroke="#888" stroke-width="2"/>
<rect x="10" y="1009" width="12" height="14" fill="none" stroke="#777" stroke-width="1.300"/><path d="M8 1012v13h10" fill="none" stroke="#aaa"/>
<!-- status right -->
<path d="M1803 1014v-4a3 3 0 0 1 6 0" fill="none" stroke="#6e6e6e" stroke-width="1.500"/><rect x="1806" y="1015" width="9" height="7" fill="#6e6e6e"/>
<circle cx="1839" cy="1016" r="8.500" fill="#f7e463" stroke="#e0a020"/><circle cx="1836" cy="1014" r="1" fill="#333"/><circle cx="1842" cy="1014" r="1" fill="#333"/><path d="M1835 1019q4 3 8 0" fill="none" stroke="#333"/>
<circle cx="1869" cy="1016" r="8.500" fill="#f7e463" stroke="#e0a020"/><circle cx="1866" cy="1014" r="1" fill="#333"/><circle cx="1872" cy="1014" r="1" fill="#333"/><path d="M1865 1021q4-3 8 0" fill="none" stroke="#333"/>
<path d="M1892 1013h15M1895 1012l1-5h7l1 5z" fill="#6e6e6e" stroke="#6e6e6e"/><circle cx="1899" cy="1017" r="3.500" fill="#ddd" stroke="#6e6e6e"/><path d="M1892 1025q7-6 15 0" fill="#999"/>
<!-- taskbar icons -->
<path d="M20 1048l8-1.200v8.700h-8zM29 1046.700l11-1.700v10.500H29zM20 1056.500h8v8.700l-8-1.200zM29 1056.500h11V1067l-11-1.700z" fill="#fff"/>
<ellipse cx="94" cy="1055" rx="13" ry="14" fill="none" stroke="#2a9df4" stroke-width="5"/><path d="M96 1069q-2-6 3-7 3-3 6 0 4 1 3 5-1 2-3 2z" fill="#f4f8fb"/>
<path d="M142 1043h10l2 3h16v21h-28z" fill="#f5cd5a"/><path d="M142 1043h10l2 3h-12z" fill="#e09a12"/><rect x="149" y="1056" width="14" height="11" fill="#3a9ee0"/><rect x="153" y="1060" width="6" height="7" fill="#f5cd5a"/>
<rect x="204" y="1041" width="25" height="27" rx="3" fill="#2a7df0"/><path d="M208 1051l4 9 3-6 3 6 4-9" fill="none" stroke="#fff" stroke-width="1.800"/><rect x="222" y="1058" width="9" height="12" rx="1" fill="#6aa8f5"/>
<circle cx="280.500" cy="1054" r="12.500" fill="#3ddc84"/><circle cx="280.500" cy="1051" r="4" fill="#2f5d46"/><path d="M274 1066l6.500-14 6.500 14" fill="none" stroke="#e8e8e8" stroke-width="1.500"/>
<!-- tray -->
<path d="M1544 1060l8-8 8 8" fill="none" stroke="#fff" stroke-width="1.200"/>
<ellipse cx="1582" cy="1055" rx="6" ry="9" fill="#111"/><ellipse cx="1582" cy="1058" rx="4" ry="6" fill="#f4f4f4"/><path d="M1575 1053h14l-1 4h-12z" fill="#e02020"/>
<path d="M1607 1063a14 14 0 0 1 14-15M1611 1063a10 10 0 0 1 10-10M1615 1063a6 6 0 0 1 6-6" fill="none" stroke="#d8d8d8" stroke-width="1.200"/><circle cx="1620" cy="1062" r="1.500" fill="#eee"/>
<rect x="1636" y="1050" width="15" height="12" fill="none" stroke="#fff" stroke-width="1.500"/><rect x="1639" y="1052.500" width="10" height="7" fill="#fff"/><path d="M1635 1045v4" stroke="#fff" stroke-width="1.500"/>
<path d="M1664 1052h4l5-5v17l-5-5h-4z" fill="none" stroke="#eee" stroke-width="1.200"/><path d="M1676 1050q3 5 0 11M1679 1047q5 8 0 16" fill="none" stroke="#888" stroke-width="1.200"/>
<path d="M1695 1051h15v9h-15zM1702.500 1046v18" fill="none" stroke="#fff" stroke-width="1.200"/>
<path d="M1732 1046h15q3 0 2 3l-3 12q-1 2-3 2h-11q-3 0-3-3l3-12q0-2 0-2z" fill="#e8491d"/><path d="M1744 1050h-8l-1 4.500h7l-1 4.500h-8" fill="none" stroke="#fff" stroke-width="2.200"/>
<rect x="1869.500" y="1046.500" width="19" height="16" fill="none" stroke="#fff" stroke-width="1.100"/>
</svg>
<div class="t" style="left:1666px;top:1051px;font-size:16px;letter-spacing:.1px;color:rgba(255,255,255,.55)">https://blog.csdn.net/qq_42257666</div>
</body></html>
